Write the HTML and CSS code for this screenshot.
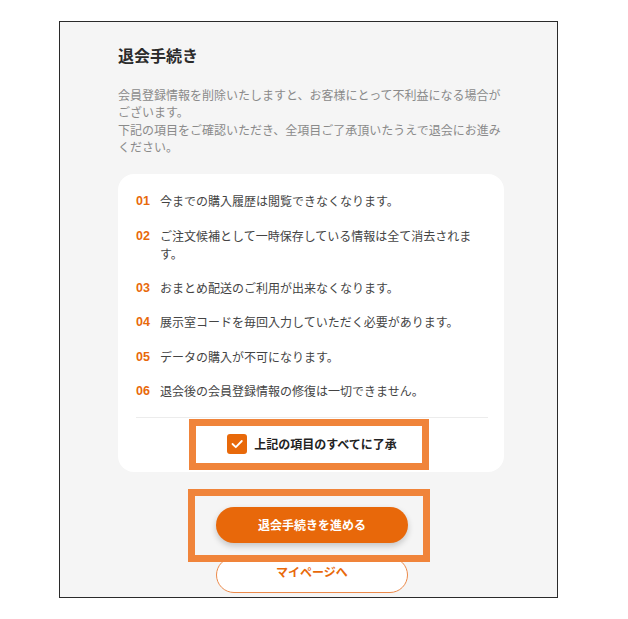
FILE: index.html
```html
<!DOCTYPE html>
<html lang="ja">
<head>
<meta charset="utf-8">
<title>退会手続き</title>
<link rel="stylesheet" href="styles.css">
</head>
<body>
<div class="frame">
  <div class="page">
    <h1 class="title">退会手続き</h1>
    <p class="lead">会員登録情報を削除いたしますと、お客様にとって不利益になる場合がございます。<br>下記の項目をご確認いただき、全項目ご了承頂いたうえで退会にお進みください。</p>
    <div class="card">
      <ol class="notes">
        <li class="note"><span class="num">01</span><span class="txt">今までの購入履歴は閲覧できなくなります。</span></li>
        <li class="note"><span class="num">02</span><span class="txt">ご注文候補として一時保存している情報は全て消去されます。</span></li>
        <li class="note"><span class="num">03</span><span class="txt">おまとめ配送のご利用が出来なくなります。</span></li>
        <li class="note"><span class="num">04</span><span class="txt">展示室コードを毎回入力していただく必要があります。</span></li>
        <li class="note"><span class="num">05</span><span class="txt">データの購入が不可になります。</span></li>
        <li class="note"><span class="num">06</span><span class="txt">退会後の会員登録情報の修復は一切できません。</span></li>
      </ol>
      <div class="agree">
        <span class="check"><svg width="20" height="20" viewBox="0 0 20 20"><polyline points="5.5,10 8.8,13.2 14.8,7" fill="none" stroke="#fff" stroke-width="1.8" stroke-linecap="round" stroke-linejoin="round"/></svg></span>
        <span class="agree-label">上記の項目のすべてに了承</span>
      </div>
      <div class="mark mark-agree"></div>
    </div>
    <div class="actions">
      <button class="btn btn-primary">退会手続きを進める</button>
      <button class="btn btn-outline">マイページへ</button>
      <div class="mark mark-btn"></div>
    </div>
  </div>
</div>
</body>
</html>
```
FILE: styles.css
```css
* { box-sizing: border-box; }
html, body { margin: 0; padding: 0; background: #fff; }
body {
  font-family: "Noto Sans CJK JP", "Noto Sans", sans-serif;
}
.frame {
  margin: 21px 0 0 59px;
  width: 499px;
  height: 577px;
  border: 1px solid #2a2a2a;
  background: #f5f5f5;
  overflow: hidden;
}
.page {
  padding: 21px 0 0 58px;
}
.title {
  margin: 0;
  font-size: 16px;
  line-height: 24px;
  font-weight: 700;
  color: #2b2b2b;
}
.lead {
  margin: 19px 0 0;
  width: 386px;
  font-size: 12px;
  line-height: 17.3px;
  color: #8a8a8a;
}
.card {
  position: relative;
  margin-top: 19px;
  width: 386px;
  background: #fff;
  border-radius: 16px;
  padding: 18px 16px 0 18px;
}
.notes {
  list-style: none;
  margin: 0;
  padding: 0 12px 0 0;
}
.note {
  display: flex;
  font-size: 12px;
  line-height: 18px;
  margin-bottom: 16.4px;
  color: #444;
}
.num {
  flex: 0 0 24px;
  font-family: "Liberation Sans", Arial, sans-serif;
  font-weight: 700;
  font-size: 12.5px;
  color: #e8690a;
}
.txt { flex: 1; }
.agree {
  border-top: 1px solid #ececec;
  height: 55px;
  display: flex;
  align-items: center;
  justify-content: center;
  padding-bottom: 2px;
}
.check {
  width: 20px;
  height: 20px;
  border-radius: 3px;
  background: #e8690a;
  display: flex;
}
.agree-label {
  margin-left: 7px;
  font-size: 12px;
  font-weight: 700;
  color: #222;
}
.mark {
  position: absolute;
  border: 7px solid #f0843a;
  pointer-events: none;
}
.mark-agree {
  left: 71px;
  top: 245px;
  width: 240px;
  height: 51px;
}
.actions {
  position: relative;
  margin-top: 35px;
  width: 386px;
  padding-left: 2px;
  display: flex;
  flex-direction: column;
  align-items: center;
  gap: 14px;
}
.btn {
  width: 192px;
  height: 36px;
  border-radius: 18px;
  font-family: "Noto Sans CJK JP", "Noto Sans", sans-serif;
  font-size: 12px;
  font-weight: 700;
  padding: 0;
}
.btn-primary {
  background: #e8680a;
  border: none;
  color: #fff;
  box-shadow: 0 3px 6px rgba(0, 0, 0, 0.2);
}
.btn-outline {
  background: #fff;
  border: 1px solid #ec8a4a;
  color: #e8690a;
  padding-bottom: 6px;
}
.mark-btn {
  left: 70px;
  top: -18px;
  width: 242px;
  height: 73px;
}
```
